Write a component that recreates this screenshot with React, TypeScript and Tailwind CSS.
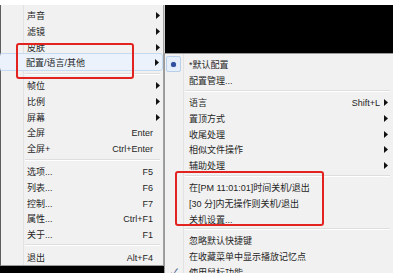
import React from 'react'

type Item =
  | { sep: true; h: string }
  | { sep?: false; label: string; key?: string; arrow?: boolean; hl?: boolean }

const leftItems: Item[] = [
  { label: '声音', arrow: true },
  { label: '滤镜', arrow: true },
  { label: '皮肤', arrow: true },
  { label: '配置/语言/其他', arrow: true, hl: true },
  { sep: true, h: 'h-[7.5px]' },
  { label: '帧位', arrow: true },
  { label: '比例', arrow: true },
  { label: '屏幕', arrow: true },
  { label: '全屏', key: 'Enter' },
  { label: '全屏+', key: 'Ctrl+Enter' },
  { sep: true, h: 'h-[8px]' },
  { label: '选项...', key: 'F5' },
  { label: '列表...', key: 'F6' },
  { label: '控制...', key: 'F7' },
  { label: '属性...', key: 'Ctrl+F1' },
  { label: '关于...', key: 'F1' },
  { sep: true, h: 'h-[7.5px]' },
  { label: '退出', key: 'Alt+F4' },
]

const subItems: (Item & { mark?: 'radio' | 'check' })[] = [
  { label: '*默认配置', mark: 'radio' },
  { label: '配置管理...' },
  { sep: true, h: 'h-[6px]' },
  { label: '语言', key: 'Shift+L', arrow: true },
  { label: '置顶方式', arrow: true },
  { label: '收尾处理', arrow: true },
  { label: '相似文件操作', arrow: true },
  { label: '辅助处理', arrow: true },
  { sep: true, h: 'h-[6px]' },
  { label: '在[PM 11:01:01]时间关机/退出' },
  { label: '[30 分]内无操作则关机/退出' },
  { label: '关机设置...' },
  { sep: true, h: 'h-[6px]' },
  { label: '忽略默认快捷键' },
  { label: '在收藏菜单中显示播放记忆点' },
  { label: '使用鼠标功能', mark: 'check' },
]

function Arrow() {
  return (
    <svg width="4" height="7" viewBox="0 0 4 7" className="block">
      <polygon points="0,0 4,3.5 0,7" fill="#111" />
    </svg>
  )
}

function Sep({ h, indent }: { h: string; indent: string }) {
  return (
    <div className={`${h} flex items-center ${indent} pr-[3px]`}>
      <div className="h-px w-full bg-[#dedede] shadow-[0_1px_0_#ffffff]" />
    </div>
  )
}

export default function App() {
  return (
    <div className="relative w-[393px] h-[273px] overflow-hidden bg-black text-[9px] leading-none text-[#1f1f1f] font-['Liberation_Sans','Noto_Sans_CJK_SC',sans-serif]">
      <div className="h-[5px] bg-white" />
      <div className="flex">
        {/* main menu */}
        <div className="w-[164px] shrink-0">
          <div className="relative bg-[#f1f1f1] border-l border-[#5e5e5e] border-r border-r-[#a0a0a0] border-b border-b-[#9a9a9a] pt-[2.2px] pb-px">
            <div className="absolute left-[22px] top-0 bottom-0 w-px bg-[#e2e2e2]" />
            {leftItems.map((it, i) =>
              it.sep ? (
                <Sep key={i} h={it.h} indent="pl-[24px]" />
              ) : (
                <div
                  key={i}
                  className={`relative h-[15.6px] flex items-center pl-[26px] ${
                    it.hl ? 'mx-px -ml-px bg-[#ebf2fb] rounded-[2px] outline outline-[#c5d9f1]' : ''
                  }`}
                >
                  <span className="flex-1 whitespace-nowrap translate-y-[2px]">{it.label}</span>
                  {it.key && <span className="whitespace-nowrap translate-y-[2px]">{it.key}</span>}
                  <span className="w-[10px] flex justify-start pl-[3px] translate-y-[1px]">{it.arrow && <Arrow />}</span>
                </div>
              )
            )}
          </div>
        </div>

        {/* sub menu */}
        <div className="flex-1 min-w-0">
          <div className="h-[48px] bg-black border-l border-[#d0d0d0]" />
          <div className="relative bg-[#f1f1f1] border-l border-t border-[#9a9a9a] pt-[2px] h-[300px]">
            <div className="absolute left-[18px] top-0 bottom-0 w-px bg-[#e2e2e2]" />
            {subItems.map((it, i) =>
              it.sep ? (
                <Sep key={i} h={it.h} indent="pl-[20px]" />
              ) : (
                <div key={i} className="relative h-[15.8px] flex items-center pl-[24px]">
                  {it.mark === 'radio' && (
                    <div className="absolute left-[1px] top-0 w-[15px] h-[16px] rounded-[2px] bg-[#e6eef9] border border-[#b8cfeb] flex items-center justify-center">
                      <div className="w-[5px] h-[5px] rounded-full bg-[#2f4f9a] shadow-[0_0_1px_#5b7bd0]" />
                    </div>
                  )}
                  {it.mark === 'check' && (
                    <span className="absolute left-[6px] text-[10px] text-[#1d3f7a] translate-y-[2px]">✓</span>
                  )}
                  <span className="flex-1 whitespace-nowrap translate-y-[2px]">{it.label}</span>
                  {it.key && <span className="whitespace-nowrap translate-y-[2px]">{it.key}</span>}
                  <span className="w-[13px] flex justify-start pl-[4px] translate-y-[1px]">{it.arrow && <Arrow />}</span>
                </div>
              )
            )}
          </div>
        </div>
      </div>

      {/* annotation boxes */}
      <div className="absolute left-[16px] top-[43px] w-[118px] h-[36px] border-2 border-[#e3231f] rounded-[3px]" />
      <div className="absolute left-[175px] top-[171px] w-[149px] h-[55px] border-2 border-[#e3231f] rounded-[3px]" />
    </div>
  )
}
